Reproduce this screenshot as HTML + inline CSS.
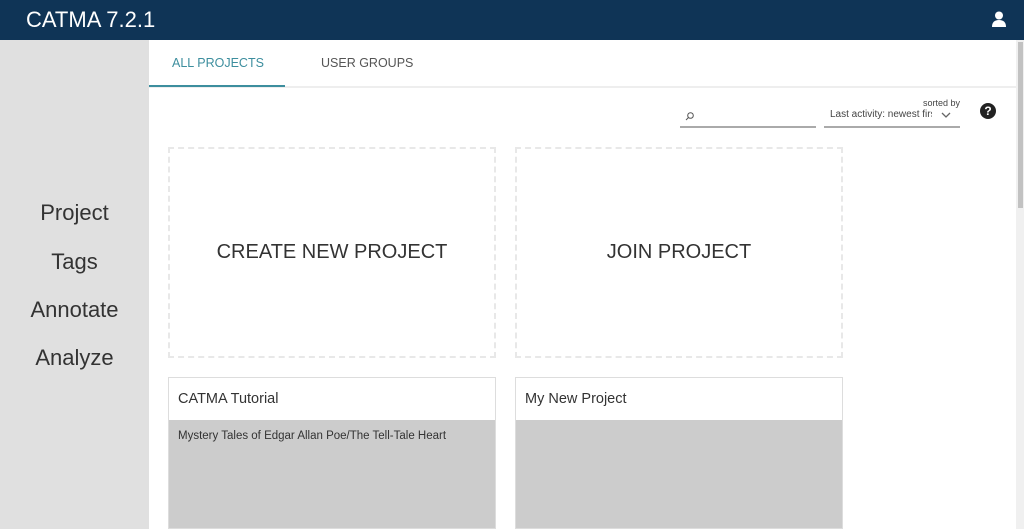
<!DOCTYPE html>
<html><head><style>
*{margin:0;padding:0;box-sizing:border-box}
html,body{width:1024px;height:529px;overflow:hidden}
body{font-family:"Liberation Sans",sans-serif;background:#fff;position:relative}
.hdr{position:absolute;left:0;top:0;width:1024px;height:40px;background:#0f3456;color:#fff}
.hdr .t{position:absolute;left:26px;top:7px;font-size:22px}
.side{position:absolute;left:0;top:40px;width:149px;height:489px;background:#e0e0e0}
.side div{position:absolute;width:149px;text-align:center;font-size:22px;color:#333}
.tabs{position:absolute;left:149px;top:40px;width:867px;height:48px;border-bottom:2px solid #eee}
.tab{position:absolute;top:16px;font-size:12.5px}
.dash{position:absolute;border:2px dashed #e8e8e8;display:flex;align-items:center;justify-content:center;font-size:20px;color:#333}
.card{position:absolute;border:1px solid #ddd;background:#ccc;height:152px}
.card .h{background:#fff;height:42px;padding:13px 9px;font-size:14.5px;color:#333}
.card .b{padding:10px 9px;font-size:11.5px;color:#333}
</style></head><body>
<div class="hdr"><div class="t">CATMA 7.2.1</div>
<svg style="position:absolute;left:992px;top:11px" width="14" height="16" viewBox="0 0 14 16"><circle cx="7" cy="4.5" r="4" fill="#fff"/><path d="M0 16 Q0 9 7 9 Q14 9 14 16Z" fill="#fff"/></svg></div>
<div class="side">
<div style="top:160px">Project</div><div style="top:209px">Tags</div><div style="top:257px">Annotate</div><div style="top:305px">Analyze</div></div>
<div class="tabs">
<div class="tab" style="left:23px;color:#3d8e9e">ALL PROJECTS</div>
<div class="tab" style="left:172px;color:#555">USER GROUPS</div>
<div style="position:absolute;left:0;top:45px;width:136px;height:2px;background:#3d8e9e"></div></div>
<div style="position:absolute;left:1016px;top:40px;width:8px;height:489px;background:#f0f0f0"><div style="margin-left:2px;margin-top:2px;width:5px;height:166px;background:#c2c2c2"></div></div>
<div style="position:absolute;left:680px;top:105px;width:136px;height:23px;border-bottom:2px solid #aaa">
<svg style="position:absolute;left:5px;top:7px" width="9" height="9" viewBox="0 0 9 9"><circle cx="5.5" cy="3.5" r="2.8" stroke="#555" fill="none"/><path d="M3.5 5.5L1 8" stroke="#555"/></svg></div>
<div style="position:absolute;left:824px;top:98px;width:136px;height:30px;border-bottom:2px solid #aaa">
<span style="position:absolute;right:0;top:0;font-size:9px;color:#444">sorted by</span>
<span style="position:absolute;left:6px;top:11px;font-size:10px;color:#444;white-space:nowrap;width:102px;overflow:hidden">Last activity: newest first</span>
<svg style="position:absolute;left:117px;top:14px" width="10" height="6"><path d="M1 1L5 5L9 1" stroke="#666" fill="none" stroke-width="1.3"/></svg></div>
<div style="position:absolute;left:980px;top:103px;width:16px;height:16px;border-radius:50%;background:#222;color:#fff;font-size:12px;font-weight:bold;text-align:center;line-height:16px">?</div>
<div class="dash" style="left:168px;top:147px;width:328px;height:211px">CREATE NEW PROJECT</div>
<div class="dash" style="left:515px;top:147px;width:328px;height:211px">JOIN PROJECT</div>
<div class="card" style="left:168px;top:377px;width:328px"><div class="h">CATMA Tutorial</div><div class="b">Mystery Tales of Edgar Allan Poe/The Tell-Tale Heart</div></div>
<div class="card" style="left:515px;top:377px;width:328px"><div class="h">My New Project</div></div>
</body></html>
